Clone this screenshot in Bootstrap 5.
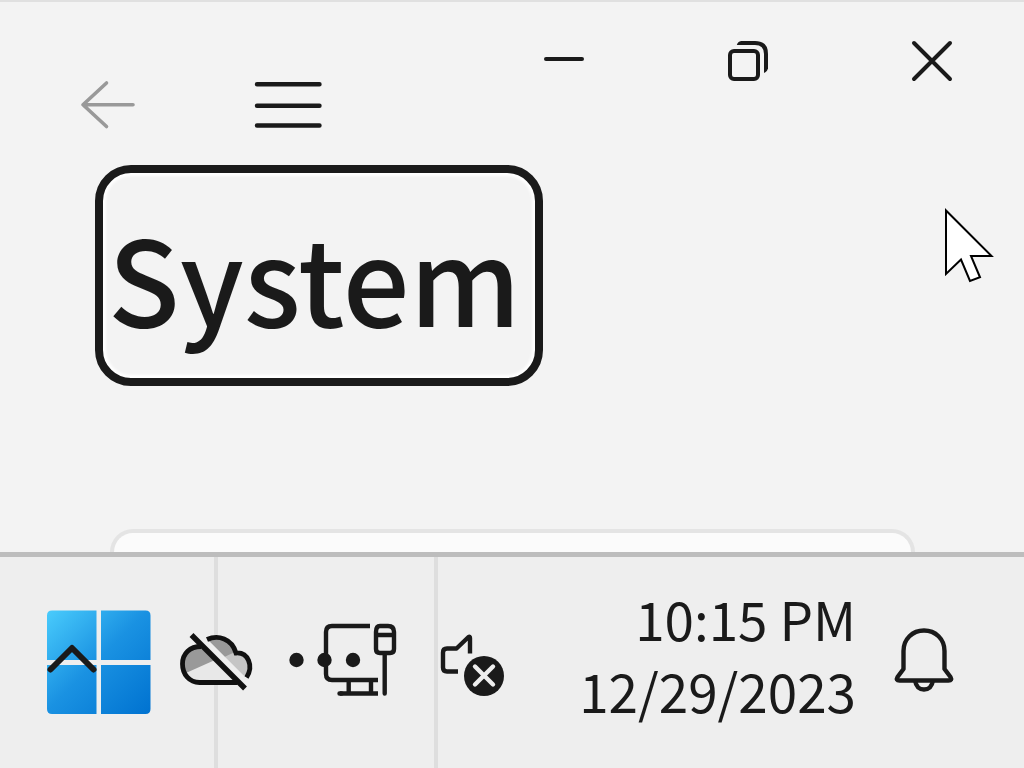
<!DOCTYPE html>
<html lang="en">
<head>
<meta charset="utf-8">
<meta name="viewport" content="width=device-width, initial-scale=1">
<title>System</title>
<link rel="stylesheet" href="https://cdn.jsdelivr.net/npm/bootstrap@5.3.0/dist/css/bootstrap.min.css">
<style>
  :root { --ink: #1a1a1a; }
  body { background: #f3f3f3; color: var(--ink); font-family: "Noto Sans CJK SC", "Noto Sans", sans-serif; }
  .app-window { border-top: 2px solid #e0e0e0; }
  .plain-btn { display: flex; align-items: center; justify-content: center; padding: 0; border: 0; background: none; color: var(--ink); }
  svg { display: block; overflow: visible; flex: none; }
  .nav-tools { padding: 43px 0 0 18px; }
  .nav-tools .plain-btn { width: 180px; height: 120px; }
  .caption-tools .plain-btn { width: 184px; height: 118px; }
  .crumb { margin: 0 0 0 95px; }
  .crumb a { display: block; border: 8px solid var(--ink); border-radius: 36px; padding: 31px 14px 30px 5px; font-size: 118px; line-height: 144px; font-weight: 500; color: var(--ink); box-shadow: inset 0 0 3px 3px #fff; }
  .settings-panel { margin: 143px 109px 0 110px; min-height: 23px; border: 4px solid #e4e4e4; border-bottom: 0; border-radius: 24px 24px 0 0; background: #fbfbfb; }
  .pointer { top: 206px; right: 30px; }
  .taskbar { height: 216px; border-top: 5px solid #bdbdbd; background: #eee; }
  .taskbar .plain-btn { padding-bottom: 2px; }
  .task-cell { width: 220px; border-right: 4px solid #dedede; }
  .start-cell { width: 218px; padding-right: 16px; }
  .tray .plain-btn { pointer-events: auto; }
  .tray-item { width: 144px; }
  .system-item { padding-left: 36px; gap: 40px; }
  .taskbar .clock { padding-bottom: 18px; font-size: 53px; line-height: 72px; text-align: right; }
  .clock-gap { gap: 32px; padding-right: 64px; }
</style>
</head>
<body>
<div class="d-flex flex-column min-vh-100">
  <main class="app-window position-relative flex-grow-1 d-flex flex-column">
    <header class="d-flex justify-content-between align-items-start">
      <nav class="nav-tools d-flex" aria-label="Navigation">
        <button class="plain-btn" type="button" aria-label="Back" disabled>
          <svg width="56" height="50" viewBox="80 80 56 50" fill="none" stroke="#999" stroke-width="3.6" stroke-linecap="round" stroke-linejoin="round"><path d="M133 104.7H83M106.500 83 83 104.700 106.500 126.500"/></svg>
        </button>
        <button class="plain-btn" type="button" aria-label="Open navigation">
          <svg width="68" height="50" viewBox="254 80 68 50" stroke="currentColor" stroke-width="4.400" stroke-linecap="round"><path d="M257 84.200h62.500M257 105.700h62.500M257 125.500h62.500"/></svg>
        </button>
      </nav>
      <div class="caption-tools d-flex">
        <button class="plain-btn" type="button" aria-label="Minimize">
          <svg width="40" height="40" viewBox="544 41 40 40" stroke="currentColor" stroke-width="4" stroke-linecap="round"><path d="M546 59h36"/></svg>
        </button>
        <button class="plain-btn" type="button" aria-label="Restore">
          <svg width="40" height="40" viewBox="728 41 40 40" fill="none" stroke="currentColor" stroke-width="4"><rect x="730" y="51" width="28" height="28" rx="4"/><path d="M741 43h14q11 0 11 11v15"/><path d="M736.800 45Q738 41 742 41v4zM764 73q4-1.500 4-6h-4z" fill="currentColor" stroke="none"/></svg>
        </button>
        <button class="plain-btn" type="button" aria-label="Close">
          <svg width="40" height="40" viewBox="912 41 40 40" stroke="currentColor" stroke-width="4" stroke-linecap="round"><path d="m914 43 36 36M950 43l-36 36"/></svg>
        </button>
      </div>
    </header>
    <h1 class="crumb align-self-start"><a class="text-decoration-none" href="#system">System</a></h1>
    <section class="settings-panel flex-grow-1" id="system" aria-label="System settings"></section>
    <svg class="pointer position-absolute" width="50" height="76" viewBox="944 208 50 76" fill="#fff" stroke="#000" stroke-width="2" aria-hidden="true"><path d="M946 210.500v63.500l15-14.500 9 21.500 10-3.700-9-21.300h20.500z"/></svg>
  </main>

  <footer class="taskbar position-relative d-flex">
    <button class="plain-btn task-cell start-cell" type="button" aria-label="Start">
      <svg width="104" height="104" viewBox="47 610 104 104"><defs><linearGradient id="tile-blue" x1="47" y1="610" x2="151" y2="714" gradientUnits="userSpaceOnUse"><stop stop-color="#4accfc"/><stop offset=".48" stop-color="#1a92e2"/><stop offset="1" stop-color="#0072d0"/></linearGradient></defs><path fill="url(#tile-blue)" d="M52 610.500h44.500v49.500H47v-44.500q0-5 5-5zM101 610.500h44.500q5 0 5 5V660H101zM47 665h49.500v49H52q-5 0-5-5zM101 665h49.500v44q0 5-5 5H101z"/></svg>
    </button>
    <button class="plain-btn task-cell" type="button" aria-label="More apps">
      <svg width="72" height="76" viewBox="290 624 72 76" fill="currentColor"><circle cx="296.500" cy="660" r="7.200"/><circle cx="324.500" cy="660" r="7.200"/><circle cx="353" cy="660" r="7.200"/></svg>
    </button>
    <div class="tray position-absolute top-0 start-0 w-100 h-100 d-flex align-items-center pe-none">
      <button class="plain-btn tray-item" type="button" aria-label="Show hidden icons">
        <svg width="72" height="76" viewBox="36 624 72 76" fill="none" stroke="currentColor" stroke-width="6" stroke-linecap="round" stroke-linejoin="round"><path d="M50.500 669.500 72 648l21.500 21.500"/></svg>
      </button>
      <button class="plain-btn tray-item" type="button" aria-label="Cloud storage, offline">
        <svg width="72" height="76" viewBox="180 624 72 76" fill="none"><path fill="#e8e8e8" d="M186 673l29-13 28 17q-2 5-8 5h-36q-10 0-13-9z"/><path fill="#999" d="M183 664q0-18 18-18l14 14-29 13q-3-3-3-9zM207 640q20-6 28 13l-12 6-18-18z"/><path fill="#c5c5c5" d="m220 659 15-7q17 2 15 16l-6 8-24-16z"/><path stroke="#eee" stroke-width="6" d="m200 636 49 49"/><path stroke="#111" stroke-width="4.800" d="M201 646.500c-11 0-18.500 7-18.500 17.500s7 18.500 17 18.500h38M207 639.500c11-5 25-1 29 13.500 12-1 18 13 10.500 24.500"/><path stroke="#111" stroke-width="5.500" d="m191.500 635 53.500 53.500"/></svg>
      </button>
      <button class="plain-btn system-item" type="button" aria-label="Network and volume">
        <svg width="72" height="76" viewBox="324 624 72 76" fill="none" stroke="currentColor" stroke-width="4.400"><path d="M370 626h-38q-6 0-6 6v42q0 6 6 6h46M348.700 680v13.500M371 680v13.500M378 693.500h-38"/><path d="M339.500 693.500h2M384.700 655v38.500" stroke-linecap="round"/><path d="M380 626h8q6 0 6 6v17q0 4-4 4h-10q-4 0-4-4v-17q0-6 4-6zM376 635h18"/></svg>
        <svg width="72" height="76" viewBox="436 624 72 76" fill="none" stroke="currentColor" stroke-width="4.400"><path d="M458 671.500h-11q-4 0-4-4v-15q0-4 4-4h9.500l12-11.500q1.500-1 1.500 1v15.500" stroke-linejoin="round"/><circle cx="484" cy="676" r="20" fill="currentColor" stroke="none"/><path stroke="#eee" stroke-linecap="round" d="m475 666.500 18 18M493 666.500l-18 18"/></svg>
      </button>
      <div class="clock-gap ms-auto d-flex align-items-center">
        <button class="plain-btn clock" type="button"><time datetime="2023-12-29T22:15">10:15 PM<br>12/29/2023</time></button>
        <button class="plain-btn" type="button" aria-label="Notifications">
          <svg width="72" height="76" viewBox="888 624 72 76" fill="none" stroke="currentColor" stroke-width="4.400" stroke-linejoin="round"><path d="M903.500 669v-18c0-12 9-20.500 20.500-20.500s20.500 8.500 20.500 20.500v18l6 8q2 3.500-2 3.500h-49q-4 0-2-3.500z"/><path d="M915 680.500q1.500 9 9 9t9-9"/></svg>
        </button>
      </div>
    </div>
  </footer>
</div>
<script src="https://cdn.jsdelivr.net/npm/bootstrap@5.3.0/dist/js/bootstrap.bundle.min.js"></script>
</body>
</html>
